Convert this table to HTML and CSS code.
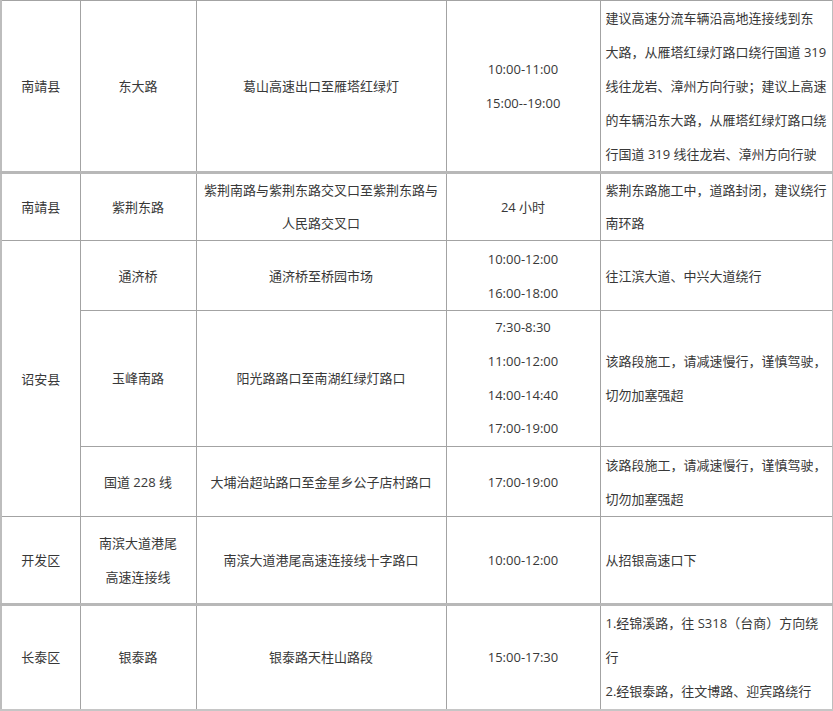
FILE: index.html
```html
<!DOCTYPE html>
<html lang="zh-CN">
<head>
<meta charset="utf-8">
<title>道路施工绕行</title>
<link rel="stylesheet" href="styles.css">
</head>
<body>
<table class="roads">
  <colgroup>
    <col class="c-area">
    <col class="c-road">
    <col class="c-section">
    <col class="c-time">
    <col class="c-note">
  </colgroup>
  <tr class="h-r1">
    <td>南靖县</td>
    <td>东大路</td>
    <td>葛山高速出口至雁塔红绿灯</td>
    <td>10:00-11:00<br>15:00--19:00</td>
    <td class="note">建议高速分流车辆沿高地连接线到东<br>大路，从雁塔红绿灯路口绕行国道 319<br>线往龙岩、漳州方向行驶；建议上高速<br>的车辆沿东大路，从雁塔红绿灯路口绕<br>行国道 319 线往龙岩、漳州方向行驶</td>
  </tr>
  <tr class="h-r2 sep">
    <td>南靖县</td>
    <td>紫荆东路</td>
    <td>紫荆南路与紫荆东路交叉口至紫荆东路与<br>人民路交叉口</td>
    <td>24 小时</td>
    <td class="note">紫荆东路施工中，道路封闭，建议绕行<br>南环路</td>
  </tr>
  <tr class="h-r3">
    <td rowspan="3">诏安县</td>
    <td>通济桥</td>
    <td>通济桥至桥园市场</td>
    <td>10:00-12:00<br>16:00-18:00</td>
    <td class="note">往江滨大道、中兴大道绕行</td>
  </tr>
  <tr class="h-r4">
    <td>玉峰南路</td>
    <td>阳光路路口至南湖红绿灯路口</td>
    <td>7:30-8:30<br>11:00-12:00<br>14:00-14:40<br>17:00-19:00</td>
    <td class="note">该路段施工，请减速慢行，谨慎驾驶，<br>切勿加塞强超</td>
  </tr>
  <tr class="h-r5">
    <td>国道 228 线</td>
    <td>大埔治超站路口至金星乡公子店村路口</td>
    <td>17:00-19:00</td>
    <td class="note">该路段施工，请减速慢行，谨慎驾驶，<br>切勿加塞强超</td>
  </tr>
  <tr class="h-r6">
    <td>开发区</td>
    <td>南滨大道港尾<br>高速连接线</td>
    <td>南滨大道港尾高速连接线十字路口</td>
    <td>10:00-12:00</td>
    <td class="note">从招银高速口下</td>
  </tr>
  <tr class="h-r7 sep last">
    <td>长泰区</td>
    <td>银泰路</td>
    <td>银泰路天柱山路段</td>
    <td>15:00-17:30</td>
    <td class="note">1.经锦溪路，往 S318（台商）方向绕<br>行<br>2.经银泰路，往文博路、迎宾路绕行</td>
  </tr>
</table>
</body>
</html>
```

FILE: styles.css
```css
html, body {
  margin: 0;
  padding: 0;
  background: #ffffff;
}

.roads {
  border-collapse: collapse;
  table-layout: fixed;
  width: 832px;
  font-family: "Open Sans", "Noto Sans CJK SC", "Noto Sans", sans-serif;
  font-size: 13px;
  color: #383838;
  border-top: 1px solid #cfcfcf;
  border-left: 2px solid #bdbdbd;
  border-right: 2px solid #bdbdbd;
}

.c-area { width: 79px; }
.c-road { width: 116px; }
.c-section { width: 250px; }
.c-time { width: 154px; }
.c-note { width: 233px; }

.roads td {
  border: 1px solid #a3a3a3;
  padding: 0 4px;
  line-height: 34px;
  text-align: center;
  vertical-align: middle;
  white-space: nowrap;
  overflow: hidden;
}

.roads td.note {
  text-align: left;
  padding-left: 5px;
}

.roads tr.sep td {
  border-top: 3px solid #b8b8b8;
}

.roads tr.last td {
  border-bottom: 2px solid #c6c6c6;
}

.h-r1 { height: 172px; }
.h-r2 { height: 66px; }
.h-r2 td { line-height: 33px; }
.h-r3 { height: 70px; }
.h-r4 { height: 136px; }
.h-r4 td { line-height: 33.75px; }
.h-r5 { height: 70px; }
.h-r6 { height: 88px; }
.h-r7 { height: 105px; }
```
